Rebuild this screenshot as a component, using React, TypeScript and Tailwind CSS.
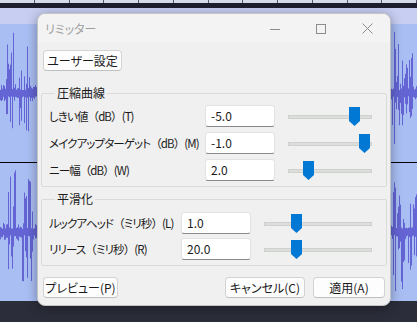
const jp = "font-['Noto_Sans_CJK_JP','Noto_Sans',sans-serif] [font-feature-settings:'palt']"

type Burst = [number, number, number]

function wavePath(w: number, h: number, seed: number, bursts: Burst[]) {
  let s = seed
  const rnd = () => {
    s = (s * 16807) % 2147483647
    return s / 2147483647
  }
  const c = h / 2
  let d = ''
  for (let x = 0; x < w; x++) {
    let env = 0.08
    for (const [a, b, k] of bursts) if (x >= a && x <= b) env = Math.max(env, k)
    const up = 3 + rnd() * 2 + (rnd() < 0.7 ? rnd() * (c - 6) * env : 0)
    const dn = 3 + rnd() * 2 + (rnd() < 0.7 ? rnd() * (c - 6) * env : 0)
    d += `M${x + 0.5} ${(c - up).toFixed(1)}V${(c + dn).toFixed(1)}`
  }
  return d
}

const Wave = ({ h, seed, bursts }: { h: number; seed: number; bursts: Burst[] }) => (
  <svg width={417} height={h} className="block">
    <path d={wavePath(417, h, seed, bursts)} stroke="#6464d4" strokeWidth={1} fill="none" />
  </svg>
)

// full-width brackets keep their normal width, kana stay proportional
const Label = ({ text }: { text: string }) => (
  <>
    {text.split(/([（）])/).map((p, i) =>
      p === '（' || p === '）' ? (
        <span key={i} className="[font-feature-settings:normal]">{p}</span>
      ) : (
        <span key={i}>{p}</span>
      ),
    )}
  </>
)

const Thumb = ({ left }: { left: number }) => (
  <svg width={11} height={19} className="absolute top-[2px]" style={{ left }}>
    <polygon points="0,0 11,0 11,14 5.5,19 0,14" fill="#0078d4" />
  </svg>
)

const Slider = ({ width, pos }: { width: number; pos: number }) => (
  <div className="relative h-[22px]" style={{ width }}>
    <div className="absolute left-0 right-0 top-[10px] h-[4px] bg-[#dcdedc] border border-[#cfd1cf]" />
    <Thumb left={pos} />
  </div>
)

const Field = ({ value }: { value: string }) => (
  <div className="h-[22px] w-[70px] shrink-0 bg-white rounded-[3px] border border-[#e3e3e3] border-b-[#8a8a8a] pl-[5px] flex items-center text-[12px] text-[#1a1a1a]">
    {value}
  </div>
)

const Btn = ({ label, w }: { label: string; w: number }) => (
  <div
    className="h-[21px] bg-[#fdfdfd] rounded-[4px] border border-[#d3d3d3] border-b-[#c0c0c0] flex items-center justify-center text-[12px] text-[#1a1a1a]"
    style={{ width: w }}
  >
    {label}
  </div>
)

const Row = ({ label, value, labelW, sliderW, pos }: { label: string; value: string; labelW: number; sliderW: number; pos: number }) => (
  <div className="flex items-center h-[22px]">
    <span className="text-[11.5px] text-[#1a1a1a] leading-[16px] whitespace-nowrap shrink-0 tracking-[-0.9px]" style={{ width: labelW }}>
      <Label text={label} />
    </span>
    <Field value={value} />
    <div className="ml-[13px]">
      <Slider width={sliderW} pos={pos} />
    </div>
  </div>
)

const Dialog = () => (
  <div className={`absolute left-[37px] top-[13px] w-[354px] h-[293px] rounded-[8px] border border-[#c4c4c4] bg-[#f0f0f0] shadow-[0_2px_12px_rgba(0,0,0,0.35)] overflow-hidden flex flex-col ${jp}`}>
    <div className="h-[29px] bg-[#f3f3f3] flex items-center shrink-0">
      <span className="pl-[7px] text-[12px] text-[#a0a0a0]">リミッター</span>
      <div className="ml-auto flex h-full">
        <div className="w-[46px] flex items-center justify-center">
          <svg width={10} height={10}><path d="M0 5.5H10" stroke="#8c8c8c" /></svg>
        </div>
        <div className="w-[46px] flex items-center justify-center">
          <svg width={10} height={10}><rect x={0.5} y={0.5} width={9} height={9} stroke="#8c8c8c" fill="none" /></svg>
        </div>
        <div className="w-[46px] flex items-center justify-center">
          <svg width={11} height={11}><path d="M0.5 0.5L10.5 10.5M10.5 0.5L0.5 10.5" stroke="#8c8c8c" /></svg>
        </div>
      </div>
    </div>
    <div className="flex-1 flex flex-col px-[3px] pt-[7px]">
      <div className="ml-[2px]">
        <Btn label="ユーザー設定" w={79} />
      </div>
      <fieldset className="mt-[14px] border border-[#dadada] rounded-[2px] pl-[7px] pt-[4px] pb-[5px] flex flex-col gap-[5px]">
        <legend className="ml-[6px] px-[2px] text-[12px] leading-[16px] text-[#1a1a1a]">圧縮曲線</legend>
        <Row label="しきい値（dB）(T)" value="-5.0" labelW={156} sliderW={84} pos={61} />
        <Row label="メイクアップターゲット（dB）(M)" value="-1.0" labelW={156} sliderW={84} pos={71} />
        <Row label="ニー幅（dB）(W)" value="2.0" labelW={156} sliderW={84} pos={15} />
      </fieldset>
      <fieldset className="mt-[4px] border border-[#dadada] rounded-[2px] pl-[7px] pt-[5px] pb-[5px] flex flex-col gap-[4px]">
        <legend className="ml-[6px] px-[2px] text-[12px] leading-[16px] text-[#1a1a1a]">平滑化</legend>
        <Row label="ルックアヘッド（ミリ秒）(L)" value="1.0" labelW={132} sliderW={108} pos={27} />
        <Row label="リリース（ミリ秒）(R)" value="20.0" labelW={132} sliderW={108} pos={27} />
      </fieldset>
      <div className="mt-[11px] flex items-center">
        <div className="ml-[2px]">
          <Btn label="プレビュー(P)" w={75} />
        </div>
        <div className="ml-auto flex gap-[8px] mr-[2px]">
          <Btn label="キャンセル(C)" w={80} />
          <Btn label="適用(A)" w={72} />
        </div>
      </div>
    </div>
  </div>
)

export default function App() {
  return (
    <div className="relative w-[417px] h-[322px] overflow-hidden bg-[#2b2d3a]">
      <div className="flex flex-col h-full">
        <div className="h-[3px] bg-[#d6dbea] flex">
          {Array.from({ length: 12 }).map((_, i) => (
            <div key={i} className="w-[35px] h-full border-r border-[#555a70]" />
          ))}
        </div>
        <div className="h-[5px] bg-[#1d1f2e]" />
        <div className="h-[16px] bg-[#c7cef2]" />
        <div className="h-[138px] bg-[#a9bef3] overflow-hidden">
          <Wave h={138} seed={7} bursts={[[6, 13, 0.95], [19, 29, 0.75], [392, 399, 0.9], [400, 412, 0.6]]} />
        </div>
        <div className="h-px bg-black" />
        <div className="h-[138px] bg-[#a9bef3] overflow-hidden">
          <Wave h={138} seed={31} bursts={[[8, 15, 1], [22, 32, 0.85], [393, 402, 0.9], [403, 416, 0.55]]} />
        </div>
        <div className="flex-1 bg-[#2b2d3a]" />
      </div>
      <Dialog />
    </div>
  )
}
